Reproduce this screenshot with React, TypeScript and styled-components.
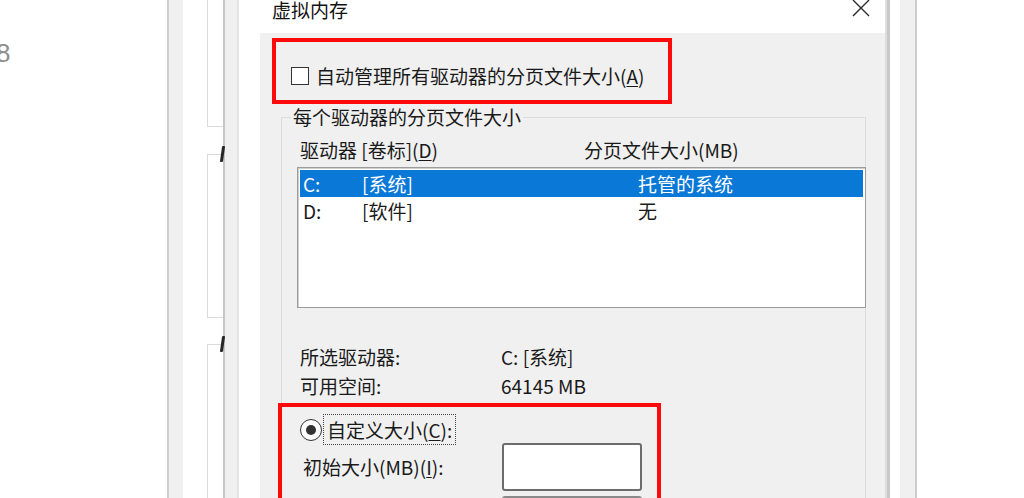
import styled, { createGlobalStyle } from "styled-components";

const GlobalStyle = createGlobalStyle`
  html, body {
    margin: 0;
    padding: 0;
    overflow: hidden;
    background: #fff;
  }
  body {
    font-family: "Noto Sans CJK SC", "Microsoft YaHei", sans-serif;
  }
`;

const drives = [
  { letter: "C:", label: "[系统]", size: "托管的系统", selected: true },
  { letter: "D:", label: "[软件]", size: "无", selected: false },
];

const App = () => {
  return (
    <>
      <GlobalStyle />
      <Screen>
        <LeftPane>
          <Digit>8</Digit>
        </LeftPane>
        <Strip $w={2} $bg="#cfcfcf" />
        <Strip $w={14} $bg="#f0f0f0" />
        <Strip $w={24} $bg="#ffffff" />
        <PanelColumn>
          <Panel $h={128} $top={-1} />
          <Panel $h={164} $top={27} $marked />
          <Panel $h={200} $top={26} $marked />
        </PanelColumn>
        <Strip $w={2} $bg="#c6c6c6" />
        <Strip $w={12} $bg="#f0f0f0" />
        <Strip $w={2} $bg="#e4e4e4" />
        <Strip $w={21} $bg="#ffffff" />

        <Dialog>
          <TitleBar>
            <Title>虚拟内存</Title>
            <svg width="18" height="18" viewBox="0 0 18 18">
              <path
                d="M1 0 L17 16 M17 0 L1 16"
                stroke="#2b2b2b"
                strokeWidth="1.4"
                fill="none"
              />
            </svg>
          </TitleBar>
          <Body>
            <Highlight $w={400} $h={66} $pad="24px 0 0 15px">
              <CheckRow>
                <CheckBox />
                <span>
                  自动管理所有驱动器的分页文件大小(<Key>A</Key>)
                </span>
              </CheckRow>
            </Highlight>

            <Group>
              <Legend>每个驱动器的分页文件大小</Legend>
              <HeaderRow>
                <span>
                  驱动器 [卷标](<Key>D</Key>)
                </span>
                <span>分页文件大小(MB)</span>
              </HeaderRow>
              <ListBox>
                {drives.map((d) => (
                  <ListRow key={d.letter} $selected={d.selected}>
                    <span>{d.letter}</span>
                    <span>{d.label}</span>
                    <span>{d.size}</span>
                  </ListRow>
                ))}
              </ListBox>

              <InfoGrid>
                <span>所选驱动器:</span>
                <span>C: [系统]</span>
                <span>可用空间:</span>
                <span>64145 MB</span>
              </InfoGrid>

              <Highlight $w={383} $pad="7px 0 0 18px" $shift={-19} $gap={7}>
                <RadioRow>
                  <Radio />
                  <FocusLabel>
                    自定义大小(<Key>C</Key>):
                  </FocusLabel>
                </RadioRow>
                <SizeRow>
                  <SizeLabel>
                    初始大小(MB)(<Key>I</Key>):
                  </SizeLabel>
                  <TextBox />
                </SizeRow>
                <SizeRow $next>
                  <SizeLabel>
                    最大值(MB)(<Key>X</Key>):
                  </SizeLabel>
                  <TextBox $muted />
                </SizeRow>
              </Highlight>
            </Group>
          </Body>
        </Dialog>

        <Strip $w={2} $bg="#dedede" />
        <Strip $w={3} $bg="#c8c8c8" />
        <Strip $w={10} $bg="#ffffff" />
        <Strip $w={15} $bg="#f0f0f0" />
        <Strip $w={2} $bg="#cdcdcd" />
        <Filler />
      </Screen>
    </>
  );
};

const Screen = styled.div`
  display: flex;
  width: 1024px;
  height: 498px;
  overflow: hidden;
  background: #fff;
  color: #1a1a1a;
  font-size: 19px;
`;

const LeftPane = styled.div`
  width: 167px;
  flex-shrink: 0;
  padding-top: 36px;
  box-sizing: border-box;
`;

const Digit = styled.div`
  margin-left: -4px;
  font-family: "Liberation Sans", Arial, sans-serif;
  font-size: 26px;
  line-height: 34px;
  color: #8e8e8e;
`;

const Strip = styled.div<{ $w: number; $bg: string }>`
  width: ${(p) => p.$w}px;
  flex-shrink: 0;
  background: ${(p) => p.$bg};
`;

const PanelColumn = styled.div`
  width: 16px;
  flex-shrink: 0;
  display: flex;
  flex-direction: column;
`;

const Panel = styled.div<{ $h: number; $top: number; $marked?: boolean }>`
  position: relative;
  flex-shrink: 0;
  height: ${(p) => p.$h}px;
  margin-top: ${(p) => p.$top}px;
  border: 1px solid #dadada;
  border-right: none;
  background: #fff;
  box-sizing: border-box;
  &::before {
    content: "";
    display: ${(p) => (p.$marked ? "block" : "none")};
    position: absolute;
    right: -1px;
    top: -9px;
    width: 3px;
    height: 16px;
    border-radius: 1px;
    background: #262626;
    transform: skewX(-8deg);
  }
`;

const Dialog = styled.section`
  width: 625px;
  flex-shrink: 0;
  background: #f0f0f0;
  display: flex;
  flex-direction: column;
`;

const TitleBar = styled.header`
  height: 33px;
  flex-shrink: 0;
  background: #fff;
  display: flex;
  justify-content: space-between;
  align-items: flex-start;
  padding: 0 15px 0 12px;
  box-sizing: border-box;
`;

const Title = styled.h1`
  margin: 0;
  font-size: 19px;
  font-weight: 400;
  line-height: 19px;
  color: #111;
`;

const Body = styled.div`
  display: flex;
  flex-direction: column;
  align-items: flex-start;
  padding: 5px 0 0 12px;
`;

const Highlight = styled.div<{
  $w: number;
  $h?: number;
  $pad: string;
  $shift?: number;
  $gap?: number;
}>`
  width: ${(p) => p.$w}px;
  height: ${(p) => (p.$h ? `${p.$h}px` : "auto")};
  margin-left: ${(p) => p.$shift ?? 0}px;
  margin-top: ${(p) => p.$gap ?? 0}px;
  padding: ${(p) => p.$pad};
  border: 4px solid #ff0a0a;
  box-sizing: border-box;
`;

const CheckRow = styled.div`
  display: flex;
  align-items: center;
  gap: 7px;
  height: 20px;
  line-height: 20px;
`;

const CheckBox = styled.span`
  width: 18px;
  height: 18px;
  border: 1.5px solid #333;
  background: #fff;
  box-sizing: border-box;
`;

const Key = styled.span`
  text-decoration: underline;
  text-underline-offset: 2px;
`;

const Group = styled.fieldset`
  margin: 3px 0 0 9px;
  width: 585px;
  min-width: 0;
  padding: 13px 0 0 15px;
  border: 1px solid #dcdcdc;
  border-bottom: none;
  box-sizing: border-box;
`;

const Legend = styled.legend`
  margin-left: -6px;
  padding: 0 2px;
  line-height: 20px;
  font-size: 19px;
`;

const HeaderRow = styled.div`
  display: grid;
  grid-template-columns: 284px auto;
  padding-left: 3px;
  line-height: 20px;
`;

const ListBox = styled.div`
  margin-top: 7px;
  width: 569px;
  height: 141px;
  padding: 2px;
  border: 1px solid #9c9c9c;
  box-shadow: inset 1px 1px 0 #cfcfcf;
  background: #fff;
  box-sizing: border-box;
`;

const ListRow = styled.div<{ $selected?: boolean }>`
  display: grid;
  grid-template-columns: 59px 276px auto;
  height: 27px;
  line-height: 27px;
  padding-left: 3px;
  background: ${(p) => (p.$selected ? "#0a78d7" : "transparent")};
  color: ${(p) => (p.$selected ? "#fff" : "#1a1a1a")};
`;

const InfoGrid = styled.div`
  display: grid;
  grid-template-columns: 201px auto;
  row-gap: 9px;
  margin-top: 39px;
  padding-left: 3px;
  line-height: 20px;
`;

const RadioRow = styled.div`
  display: flex;
  align-items: center;
  gap: 1px;
  height: 31px;
`;

const Radio = styled.span`
  position: relative;
  width: 22px;
  height: 22px;
  border: 1.5px solid #333;
  border-radius: 50%;
  background: #fff;
  box-sizing: border-box;
  display: flex;
  align-items: center;
  justify-content: center;
  &::after {
    content: "";
    width: 10px;
    height: 10px;
    border-radius: 50%;
    background: #333;
  }
`;

const FocusLabel = styled.span`
  border: 1px dotted #444;
  padding: 0 3px;
  line-height: 29px;
`;

const SizeRow = styled.div<{ $next?: boolean }>`
  display: flex;
  align-items: center;
  margin-top: ${(p) => (p.$next ? 5 : -2)}px;
  padding-left: 3px;
`;

const SizeLabel = styled.span`
  width: 199px;
  line-height: 20px;
`;

const TextBox = styled.div<{ $muted?: boolean }>`
  width: 140px;
  height: 48px;
  border: 2px solid ${(p) => (p.$muted ? "#8a8a8a" : "#6c6c6c")};
  border-radius: 3px;
  background: #fff;
  box-sizing: border-box;
`;

const Filler = styled.div`
  flex: 1;
  background: #fff;
`;

export default App;
